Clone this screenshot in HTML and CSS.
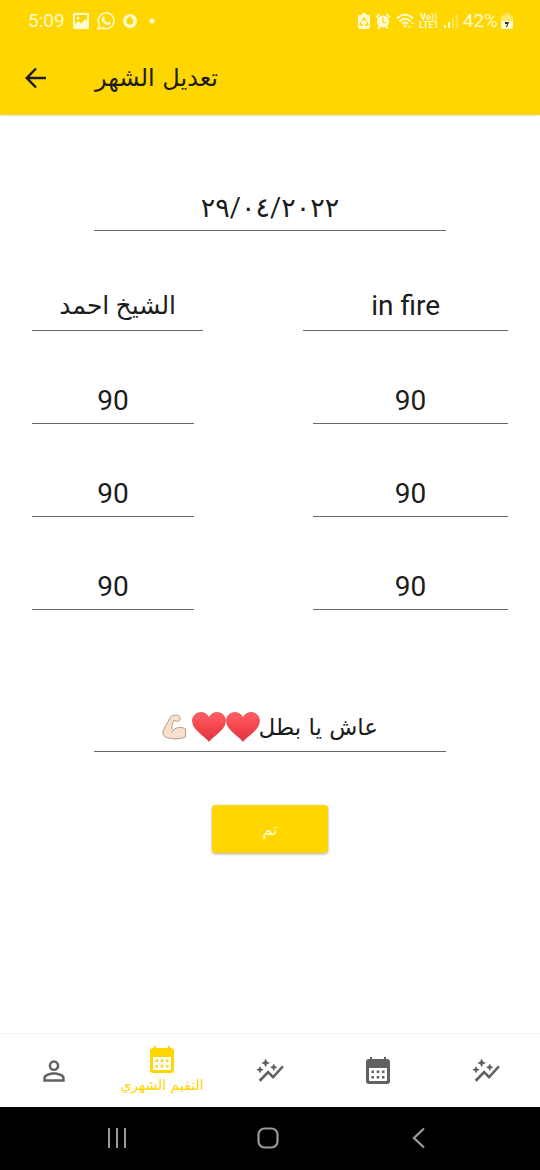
FILE: index.html
```html
<!DOCTYPE html>
<html lang="ar">
<head>
<meta charset="utf-8">
<meta name="viewport" content="width=device-width, initial-scale=1">
<title>تعديل الشهر</title>
<link rel="stylesheet" href="styles.css">
</head>
<body>
<svg class="defs" aria-hidden="true">
  <symbol id="calendar" viewBox="0 0 24 27">
    <path fill="currentColor" fill-rule="evenodd" d="M4 0h2v2h12V0h2v2h1a3 3 0 0 1 3 3v19a3 3 0 0 1-3 3H3a3 3 0 0 1-3-3V5a3 3 0 0 1 3-3h1zM3 11v12a1 1 0 0 0 1 1h16a1 1 0 0 0 1-1V11z"/>
    <path fill="currentColor" d="M5.500 13.500H8V16H5.500zm5.200 0h2.600V16h-2.600zm5.300 0h2.500V16H16zM5.500 19H8v2.500H5.500zm5.200 0h2.600v2.500h-2.600zm5.300 0h2.500v2.500H16z"/>
  </symbol>
  <symbol id="graph" viewBox="0 0 24 24">
    <path fill="currentColor" d="M14.060 9.940 12 9l2.060-.94L15 6l.94 2.060L18 9l-2.060.94L15 12zM4 14l.94-2.060L7 11l-2.060-.94L4 8l-.94 2.060L1 11l2.060.94zM8.500 9l1.090-2.410L12 5.500 9.590 4.410 8.500 2 7.410 4.410 5 5.500l2.410 1.090zM4.500 20.500l6-6.010 4 4L23 8.930l-1.410-1.410-7.090 7.970-4-4L3 19z"/>
  </symbol>
  <symbol id="heart" viewBox="0 0 34 30">
    <path fill="url(#heart-fill)" stroke="#d9353f" stroke-width=".6" d="M17 29.500C13 24 .5 18 .5 9 .5 3.500 4.500.5 9 .5c4 0 7 2.500 8 5.500 1-3 4-5.500 8-5.500 4.500 0 8.500 3 8.500 8.500 0 9-12.500 15-16.500 20.500z"/>
  </symbol>
  <linearGradient id="heart-fill" x1="0" y1="0" x2="0" y2="1"><stop offset="0" stop-color="#ff6166"/><stop offset=".5" stop-color="#f4454d"/><stop offset="1" stop-color="#df343e"/></linearGradient>
</svg>

<header class="top">
  <div class="status">
    <div class="status-group">
      <span class="status-text">5:09</span>
      <svg class="s16" viewBox="0 0 16 16" aria-hidden="true"><path fill="currentColor" fill-rule="evenodd" d="M1 0h14a1 1 0 0 1 1 1v14a1 1 0 0 1-1 1H1a1 1 0 0 1-1-1V1a1 1 0 0 1 1-1zm1 2v9l3.500-3 3 2.500L12 6l2 2V2zm3 1.500a1.500 1.500 0 1 1 0 3 1.500 1.500 0 0 1 0-3z"/></svg>
      <svg class="s18" viewBox="0 0 24 24" aria-hidden="true"><path fill="none" stroke="currentColor" stroke-width="2" d="M1.500 22.500 3.200 17A10.500 10.500 0 1 1 7.500 21z"/><path fill="currentColor" d="M7.500 6.500c.8-.8 1.500-.7 2 .3l.9 2c.2.600-.8 1.300-.8 1.800 1 1.900 2.300 3 4.200 3.700.7-.2 1.300-1.700 1.800-1.600l2.400 1.200c.5.300-.1 2.100-.8 2.600-2.500 1.900-6.200-.1-8.100-2C6.700 12.200 5 9 7.500 6.500z"/></svg>
      <svg class="s14" viewBox="0 0 14 14" aria-hidden="true"><path fill="currentColor" fill-rule="evenodd" d="M7 0a7 7 0 1 1 0 14A7 7 0 0 1 7 0zm1.500 2C5 2.500 3.500 5 3.500 7.300a3.400 3.400 0 1 0 3.800-3.400z"/></svg>
      <svg class="s14" viewBox="0 0 14 14" aria-hidden="true"><circle cx="7" cy="7" r="2.500" fill="currentColor"/></svg>
    </div>
    <div class="status-group status-right">
      <svg class="battery" viewBox="0 0 12 16" aria-hidden="true"><path fill="currentColor" d="M4 0h4v2h2a2 2 0 0 1 2 2v10a2 2 0 0 1-2 2H2a2 2 0 0 1-2-2V4a2 2 0 0 1 2-2h2z"/><path fill="none" stroke="#ffd600" stroke-width="1.300" d="m4 8 2-3 2 3M3 9l-1 3h3m4-3 1 3H7"/></svg>
      <svg class="s16" viewBox="0 0 16 16" aria-hidden="true"><circle cx="8" cy="8.500" r="6" fill="currentColor"/><path fill="none" stroke="currentColor" stroke-width="2" d="M1 4.500 4.500 1M15 4.500 11.500 1M3 15.500l2-2m8 2-2-2"/><path fill="none" stroke="#ffd600" stroke-width="1.300" d="M8 4.500V9l3 1"/></svg>
      <svg class="s18" viewBox="0 0 18 16" aria-hidden="true"><path fill="none" stroke="currentColor" stroke-width="1.800" d="M1 5.500Q9-2 17 5.500M3.500 8.500Q9 3 14.500 8.500M6 11Q9 8 12 11"/><circle cx="9" cy="13" r="1.500" fill="currentColor"/><path fill="currentColor" d="m12 13 1.500 2.500L15 13zm3-2 1.500-2.500L18 11z"/></svg>
      <span class="lte"><span>Vo))</span><span>LTE1</span></span>
      <svg class="s14" viewBox="0 0 14 14" aria-hidden="true"><path fill="currentColor" d="M0 11h2v3H0zm4-3h2v6H4z"/><path fill="currentColor" opacity=".4" d="M8 4h2v10H8zm4-4h2v14h-2z"/></svg>
      <span class="status-text charge">42%</span>
      <svg class="battery" viewBox="0 0 12 16" aria-hidden="true"><path fill="currentColor" opacity=".5" d="M4 0h4v2h2l2 2v5H0V4l2-2h2z"/><path fill="currentColor" d="M0 8h12v6a2 2 0 0 1-2 2H2a2 2 0 0 1-2-2z"/><path fill="#333" d="M4 9h4l-2 5H5l1-3H4z"/></svg>
    </div>
  </div>
  <div class="appbar">
    <button class="back" type="button" aria-label="رجوع"><svg viewBox="0 0 22 22" aria-hidden="true"><path fill="none" stroke="currentColor" stroke-width="2.500" d="M21 11H2M11 1.500 1.800 11l9.200 9.500"/></svg></button>
    <h1 class="title" dir="rtl">تعديل الشهر</h1>
  </div>
</header>

<main class="content">
  <form class="form">
    <input class="field wide date" type="text" aria-label="التاريخ" value="٢٩/٠٤/٢٠٢٢">
    <div class="pair names">
      <input class="field name-start" type="text" dir="rtl" aria-label="الاسم" value="الشيخ احمد">
      <input class="field name-end" type="text" aria-label="الفريق" value="in fire">
    </div>
    <div class="pair">
      <input class="field score-start" type="text" aria-label="الدرجة 1" value="90">
      <input class="field score-end" type="text" aria-label="الدرجة 2" value="90">
    </div>
    <div class="pair">
      <input class="field score-start" type="text" aria-label="الدرجة 3" value="90">
      <input class="field score-end" type="text" aria-label="الدرجة 4" value="90">
    </div>
    <div class="pair">
      <input class="field score-start" type="text" aria-label="الدرجة 5" value="90">
      <input class="field score-end" type="text" aria-label="الدرجة 6" value="90">
    </div>
    <div class="field wide note" dir="rtl">
      <input class="note-text" type="text" aria-label="ملاحظة" value="عاش يا بطل">
      <svg class="heart" aria-hidden="true"><use href="#heart"/></svg>
      <svg class="heart" aria-hidden="true"><use href="#heart"/></svg>
      <svg class="arm" viewBox="0 0 24 26" aria-hidden="true"><path fill="#f8e0cd" stroke="#a99180" stroke-width=".9" stroke-linejoin="round" d="M8 3.500C9.500 1.500 13 .7 15.500 1.200c2 .5 2.700 2 2.500 4-.2 1.500-1 2.300-2.500 2.100L12 6.500c-1.500 2.200-2.300 4.500-2 8 .5.700 1 1 1.500 1.500 3-3 8.500-3.500 12-1V23c-5 2.200-12 2.500-17 1-4-1-6-3-5.500-6C2 13 6 9 8 3.500z"/><path fill="none" stroke="#a99180" stroke-width=".8" d="M11.500 16c-.5 1.200-1.200 2-2.200 2.500"/></svg>
    </div>
    <button class="submit" type="button">تم</button>
  </form>
</main>

<nav class="tabs">
  <a class="tab" href="#profile" aria-label="الملف الشخصي"><svg class="s32" viewBox="0 0 24 24" aria-hidden="true"><path fill="currentColor" d="M12 5.900a2.100 2.100 0 1 1 0 4.200 2.100 2.100 0 0 1 0-4.200m0 9c2.970 0 6.100 1.460 6.100 2.100v1.100H5.900V17c0-.64 3.130-2.100 6.100-2.100M12 4a4 4 0 1 0 0 8 4 4 0 0 0 0-8zm0 9c-2.670 0-8 1.340-8 4v3h16v-3c0-2.660-5.330-4-8-4z"/></svg></a>
  <a class="tab active" href="#monthly"><svg class="calendar" aria-hidden="true"><use href="#calendar"/></svg><span class="tab-label" dir="rtl">التقيم الشهري</span></a>
  <a class="tab" href="#progress" aria-label="التقدم"><svg class="graph" aria-hidden="true"><use href="#graph"/></svg></a>
  <a class="tab" href="#calendar-page" aria-label="التقويم"><svg class="calendar" aria-hidden="true"><use href="#calendar"/></svg></a>
  <a class="tab" href="#stats" aria-label="الإحصائيات"><svg class="graph" aria-hidden="true"><use href="#graph"/></svg></a>
</nav>

<div class="system">
  <button class="key" type="button" aria-label="Recents"><svg viewBox="0 0 22 22" aria-hidden="true"><path fill="none" stroke="currentColor" stroke-width="2" d="M3 1v20M11 1v20M19 1v20"/></svg></button>
  <button class="key" type="button" aria-label="Home"><svg viewBox="0 0 22 22" aria-hidden="true"><rect x="1.500" y="1.500" width="19" height="19" rx="6" fill="none" stroke="currentColor" stroke-width="2.200"/></svg></button>
  <button class="key" type="button" aria-label="Back"><svg viewBox="0 0 22 22" aria-hidden="true"><path fill="none" stroke="currentColor" stroke-width="2.300" d="M16 1.500 6 11l10 9.500"/></svg></button>
</div>
</body>
</html>
```
FILE: styles.css
```css
* {
  box-sizing: border-box;
}

body {
  margin: 0;
  min-height: 100vh;
  display: flex;
  flex-direction: column;
  background: #fff;
  color: #1c1c1c;
  font-family: Roboto, "DejaVu Sans", sans-serif;
}

svg {
  display: block;
  flex: none;
}

button {
  border: 0;
  padding: 0;
  background: none;
  color: inherit;
  font: inherit;
}

.defs {
  position: absolute;
  width: 0;
  height: 0;
}

.top {
  background: #ffd600;
  box-shadow: 0 1px 2px rgba(0, 0, 0, 0.12);
}

.status {
  height: 42px;
  padding: 0 27px 0 28px;
  display: flex;
  justify-content: space-between;
  align-items: center;
  color: #fffbd0;
}

.status-group {
  display: flex;
  align-items: center;
  gap: 8px;
}

.status-right {
  gap: 5px;
}

.status-text {
  font-size: 19px;
  line-height: 24px;
}

.charge {
  margin-right: -2px;
}

.lte {
  display: flex;
  flex-direction: column;
  align-items: center;
  font-size: 9px;
  line-height: 8px;
  font-weight: 700;
}

.s14 {
  width: 14px;
  height: 14px;
}

.s16 {
  width: 16px;
  height: 16px;
}

.s18 {
  width: 18px;
  height: 18px;
}

.s32 {
  width: 32px;
  height: 32px;
}

.battery {
  width: 12px;
  height: 16px;
}

.appbar {
  height: 73px;
  padding: 0 25px 2px;
  display: flex;
  align-items: center;
  gap: 48px;
}

.back svg {
  width: 22px;
  height: 22px;
}

.title {
  margin: 0;
  font-family: "DejaVu Sans", sans-serif;
  font-size: 24px;
  line-height: 32px;
  font-weight: 400;
}

.content {
  flex: 1;
  padding: 70px 32px 32px;
}

.form {
  display: flex;
  flex-direction: column;
  align-items: center;
  gap: 47px;
}

.field {
  height: 46px;
  min-width: 0;
  padding: 0;
  border: 0;
  border-bottom: 1px solid #666;
  border-radius: 0;
  background: transparent;
  color: inherit;
  font-family: Roboto, "DejaVu Sans", sans-serif;
  font-size: 28px;
  text-align: center;
  outline: 0;
}

.wide {
  width: 74%;
}

.date {
  font-size: 27px;
}

.pair {
  width: 100%;
  display: flex;
  justify-content: space-between;
}

.names {
  margin-top: 7px;
}

.name-start {
  width: 36%;
  padding-bottom: 4px;
  font-size: 25px;
}

.name-end {
  width: 43%;
  padding-bottom: 4px;
}

.score-start {
  width: 34%;
}

.score-end {
  width: 41%;
}

.note {
  margin-top: 49px;
  padding-bottom: 4px;
  display: flex;
  justify-content: center;
  align-items: center;
}

.note-text {
  width: 118px;
  padding: 0;
  border: 0;
  outline: 0;
  background: transparent;
  color: inherit;
  font-family: "DejaVu Sans", sans-serif;
  font-size: 23px;
}

.heart {
  width: 34px;
  height: 30px;
}

.arm {
  width: 24px;
  height: 26px;
  margin-right: 6px;
}

.submit {
  width: 116px;
  height: 48px;
  margin-top: 6px;
  border-radius: 4px;
  background: #ffd600;
  box-shadow: 0 1px 3px rgba(0, 0, 0, 0.35);
  color: #fffbd0;
  font-family: "DejaVu Sans", sans-serif;
  font-size: 16px;
}

.tabs {
  height: 74px;
  display: flex;
  border-top: 1px solid #f2f2f2;
}

.tab {
  flex: 1;
  display: flex;
  flex-direction: column;
  align-items: center;
  justify-content: center;
  color: #616161;
  text-decoration: none;
}

.active {
  padding-top: 2px;
  color: #ffd600;
}

.tab-label {
  font-family: "DejaVu Sans", sans-serif;
  font-size: 14px;
  line-height: 24px;
  white-space: nowrap;
}

.calendar {
  width: 24px;
  height: 27px;
}

.graph {
  width: 30px;
  height: 30px;
}

.system {
  height: 63px;
  padding: 0 45px 1px 41px;
  display: flex;
  background: #000;
  color: #9a9a9a;
}

.key {
  flex: 1;
  display: flex;
  align-items: center;
  justify-content: center;
}

.key svg {
  width: 22px;
  height: 22px;
}
```
